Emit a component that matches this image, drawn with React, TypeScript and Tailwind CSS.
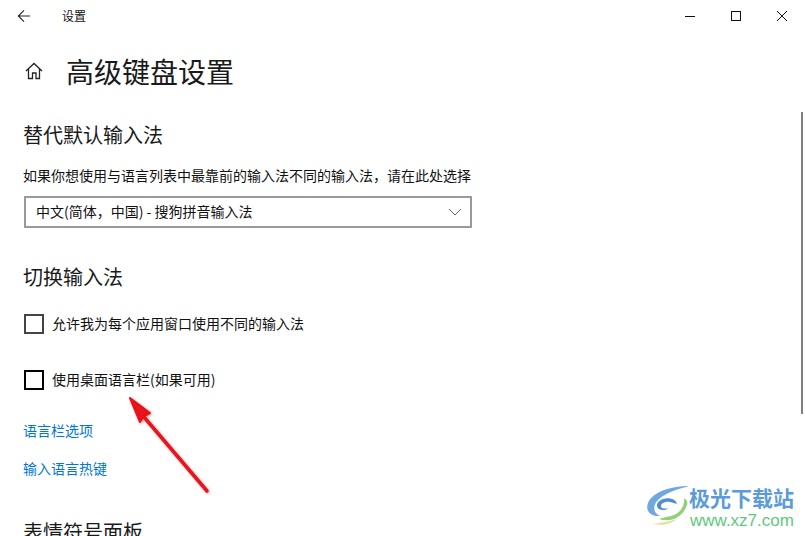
import React from "react";

const font = { fontFamily: '"Noto Sans CJK SC", "Liberation Sans", sans-serif' };

function Check({ label, dark }: { label: string; dark?: boolean }) {
  return (
    <div className="flex items-center h-5 gap-[8px]">
      <div className={`w-5 h-5 border-2 ${dark ? "border-black" : "border-[#444444]"}`} />
      <span className="text-[14px] leading-5 pb-[2px] text-[#111111]">{label}</span>
    </div>
  );
}

export default function App() {
  return (
    <div className="relative w-[805px] h-[536px] overflow-hidden bg-white text-black" style={font}>
      {/* title bar */}
      <div className="flex items-center h-8 text-[#111111]">
        <div className="w-[48px] flex justify-center">
          <svg width="16" height="16" viewBox="0 0 16 16" fill="none" stroke="#222" strokeWidth="1.1">
            <path d="M14 8H2.5M8 2.3 2.3 8 8 13.7" />
          </svg>
        </div>
        <span className="ml-[14px] text-[12px] leading-none">设置</span>
        <div className="ml-auto flex items-center">
          <div className="w-[46px] flex justify-center">
            <svg width="12" height="12" viewBox="0 0 12 12" fill="none" stroke="#111" strokeWidth="1"><path d="M1 6.5h10" /></svg>
          </div>
          <div className="w-[46px] flex justify-center">
            <svg width="12" height="12" viewBox="0 0 12 12" fill="none" stroke="#111" strokeWidth="1"><rect x="1.5" y="1.5" width="9" height="9" /></svg>
          </div>
          <div className="w-[46px] flex justify-center">
            <svg width="12" height="12" viewBox="0 0 12 12" fill="none" stroke="#111" strokeWidth="1"><path d="M1 1l10 10M11 1 1 11" /></svg>
          </div>
        </div>
      </div>

      {/* header */}
      <div className="flex items-center mt-[18px] h-[42px]">
        <div className="w-[66px] pl-[24px]">
          <svg width="20" height="20" viewBox="0 0 20 20" fill="none" stroke="#222" strokeWidth="1.3">
            <path d="M2 10 10 2.5 18 10M4.5 8v9.5h4V12h3.5v5.5h3.5V8" />
          </svg>
        </div>
        <h1 className="text-[28px] leading-[42px] font-normal text-[#1a1a1a]">高级键盘设置</h1>
      </div>

      {/* content */}
      <div className="pl-[24px]">
        <h2 className="mt-[28px] text-[20px] leading-[30px] font-normal text-[#1a1a1a] -ml-[1px]">替代默认输入法</h2>
        <p className="mt-[15px] text-[14px] leading-5 text-[#111111] -ml-[1px]">如果你想使用与语言列表中最靠前的输入法不同的输入法，请在此处选择</p>
        <div className="mt-[11px] w-[448px] h-8 border-2 border-[#999999] flex items-center justify-between pl-[10px] pr-[8px]">
          <span className="text-[14px] leading-5 pb-[2px] text-[#111111]">中文(简体，中国) - 搜狗拼音输入法</span>
          <svg width="14" height="8" viewBox="0 0 14 8" fill="none" stroke="#666" strokeWidth="1"><path d="M1 1l6 6 6-6" /></svg>
        </div>
        <h2 className="mt-[34px] text-[20px] leading-[30px] font-normal text-[#1a1a1a] -ml-[1px]">切换输入法</h2>
        <div className="mt-[22px]"><Check label="允许我为每个应用窗口使用不同的输入法" /></div>
        <div className="mt-[36px]"><Check label="使用桌面语言栏(如果可用)" dark /></div>
        <div className="mt-[30px] text-[14px] leading-5 text-[#0078d7] -ml-[1px]">语言栏选项</div>
        <div className="mt-[18px] text-[14px] leading-5 text-[#0078d7] -ml-[1px]">输入语言热键</div>
        <h2 className="mt-[39px] text-[20px] leading-[30px] font-normal text-[#1a1a1a] -ml-[1px]">表情符号面板</h2>
      </div>

      {/* scrollbar */}
      <div className="absolute left-[801px] top-[112px] w-[2px] h-[302px] bg-[#808080]" />

      {/* red arrow annotation */}
      <svg className="absolute left-[120px] top-[390px]" width="100" height="110" viewBox="0 0 100 110" fill="none">
        <defs>
          <filter id="s" x="-30%" y="-30%" width="160%" height="160%">
            <feDropShadow dx="1" dy="1" stdDeviation="1.5" floodColor="#000" floodOpacity="0.35" />
          </filter>
        </defs>
        <g filter="url(#s)">
          <path d="M87 101 24 27" stroke="#e8121a" strokeWidth="3.5" strokeLinecap="round" />
          <path d="M10 8 30 23 24 26 20 32Z" fill="#e8121a" stroke="#e8121a" strokeWidth="2" strokeLinejoin="round" />
        </g>
      </svg>

      {/* watermark */}
      <div className="absolute left-[645px] top-[484px] w-[160px] h-[46px] bg-white/80">
        <svg className="absolute left-0 top-[1px]" width="46" height="42" viewBox="0 0 46 42" fill="none">
          <path d="M44 1C28 1 8 6 3 18c-3 8 3 14 12 13C8 28 7 20 14 14 22 7 34 4 44 1Z" fill="#6fa8e0" />
          <path d="M14 34c12 4 24-2 28-14 1-3 0-5-3-7 1 8-4 16-13 18-5 1-9 2-12 3Z" fill="#93d07a" />
          <path d="M32 19c-1-5-8-7-14-5-6 2-8 7-4 10 3 2 8 1 9-1-3 1-7 1-7-2 0-3 5-5 9-4 3 1 5 1 7 2Z" fill="#4f8ed0" />
          <path d="M8 39c10 2 18 0 24-5-7 2-16 4-24 5Z" fill="#e6dfa0" />
        </svg>
        <div className="absolute left-[44px] top-[3px] text-[21px] leading-[21px] font-bold text-[#5b9bd9] whitespace-nowrap">极光下载站</div>
        <div className="absolute left-[45px] top-[28px] text-[17px] leading-[18px] text-[#62c77e] whitespace-nowrap" style={{ fontFamily: '"Liberation Sans", sans-serif' }}>www.xz7.com</div>
      </div>
    </div>
  );
}
